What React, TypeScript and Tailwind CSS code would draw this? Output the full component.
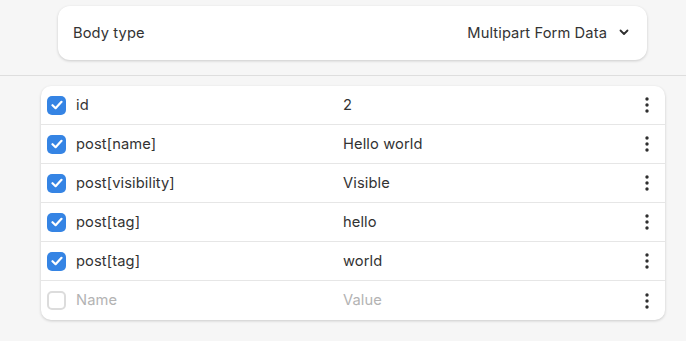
import React from "react";

const rows = [
  { name: "id", value: "2", on: true },
  { name: "post[name]", value: "Hello world", on: true },
  { name: "post[visibility]", value: "Visible", on: true },
  { name: "post[tag]", value: "hello", on: true },
  { name: "post[tag]", value: "world", on: true },
];

const Dots = () => (
  <svg width="4" height="16" viewBox="0 0 4 16" className="text-[#2e2e2e]">
    <circle cx="2" cy="2" r="1.7" fill="currentColor" />
    <circle cx="2" cy="8" r="1.7" fill="currentColor" />
    <circle cx="2" cy="14" r="1.7" fill="currentColor" />
  </svg>
);

const Check = ({ on }: { on: boolean }) =>
  on ? (
    <div className="w-[19px] h-[19px] rounded-[5px] bg-[#3584e4] flex items-center justify-center">
      <svg width="12" height="10" viewBox="0 0 12 10" fill="none">
        <path d="M1.5 5.2 L4.6 8.2 L10.5 1.8" stroke="white" strokeWidth="2.2" strokeLinecap="round" strokeLinejoin="round" />
      </svg>
    </div>
  ) : (
    <div className="w-[19px] h-[19px] rounded-[5px] border-2 border-[#dcdcdc] bg-white" />
  );

const Row = ({ name, value, on, placeholder, last }: { name: string; value: string; on: boolean; placeholder?: boolean; last?: boolean }) => (
  <div className={`flex items-center h-[39px] pl-[6px] pr-[16px] ${last ? "" : "border-b border-[#e6e6e6]"}`}>
    <Check on={on} />
    <span className={`ml-[10px] w-[267px] ${placeholder ? "text-[#b3b3b3]" : "text-[#333333]"}`}>{name}</span>
    <span className={`flex-1 ${placeholder ? "text-[#b3b3b3]" : "text-[#333333]"}`}>{value}</span>
    <Dots />
  </div>
);

export default function App() {
  return (
    <div className="w-[686px] h-[341px] bg-[#f6f6f6] text-[14.7px] tracking-[0.1px] font-['Inter',sans-serif] overflow-hidden">
      <div className="pt-[6px] pl-[58px] pr-[39px] pb-[15px] border-b border-[#dedede]">
        <div className="h-[54px] bg-white rounded-[12px] shadow-[0_1px_3px_rgba(0,0,0,0.18)] flex items-center justify-between pl-[15px] pr-[18px]">
          <span className="text-[#333333]">Body type</span>
          <div className="flex items-center gap-[12px] text-[#333333]">
            <span>Multipart Form Data</span>
            <svg width="10" height="7" viewBox="0 0 10 7" fill="none">
              <path d="M1.5 1.5 L5 5 L8.5 1.5" stroke="#2e2e2e" strokeWidth="1.8" strokeLinecap="round" strokeLinejoin="round" />
            </svg>
          </div>
        </div>
      </div>
      <div className="pt-[10px] pl-[41px] pr-[21px]">
        <div className="bg-white rounded-[10px] shadow-[0_1px_3px_rgba(0,0,0,0.18)] overflow-hidden">
          {rows.map((r, i) => (
            <Row key={i} name={r.name} value={r.value} on={r.on} />
          ))}
          <Row name="Name" value="Value" on={false} placeholder last />
        </div>
      </div>
    </div>
  );
}
